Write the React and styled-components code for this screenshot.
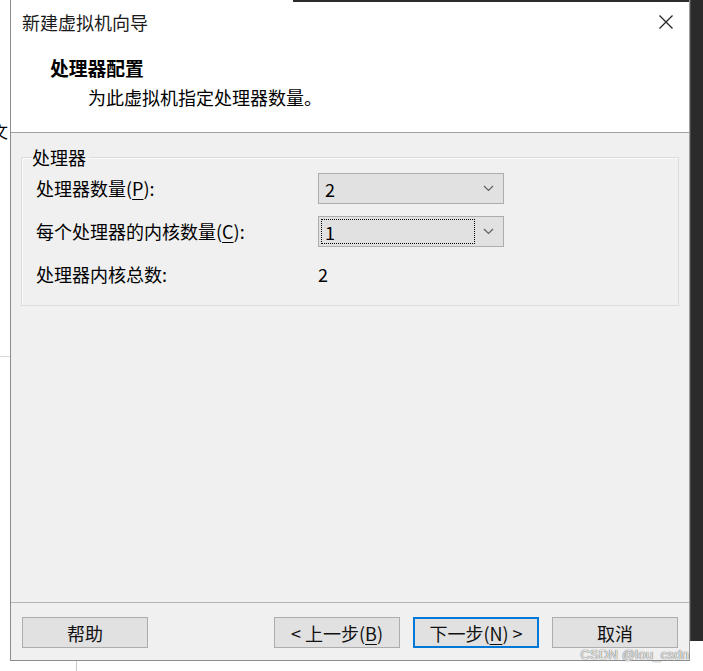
import styled, { createGlobalStyle } from "styled-components";

const GlobalStyle = createGlobalStyle`
  html, body {
    margin: 0;
    padding: 0;
    background: #ffffff;
    width: 703px;
    height: 671px;
    overflow: hidden;
  }
  body {
    font-family: "Noto Sans CJK SC", "Microsoft YaHei", sans-serif;
    color: #000;
  }
`;

const Stage = styled.div`
  position: relative;
  display: flex;
  align-items: flex-start;
  width: 703px;
  height: 671px;
`;

const Gutter = styled.div`
  width: 10px;
  height: 671px;
  overflow: hidden;
  display: flex;
  flex-direction: column;
  padding-top: 120px;
  box-sizing: border-box;
  .frag {
    font-size: 17px;
    line-height: 22px;
    margin-left: -9px;
    white-space: nowrap;
  }
  .edge {
    margin-top: 214px;
    height: 1px;
    background: #d8d8d8;
  }
`;

const WindowColumn = styled.div`
  display: flex;
  flex-direction: column;
`;

const Window = styled.div`
  width: 680px;
  height: 661px;
  box-sizing: border-box;
  border-left: 1px solid #8c8c8c;
  border-right: 1px solid #9a9a9a;
  border-bottom: 1px solid #8c8c8c;
  display: flex;
  flex-direction: column;
  background: #fff;
`;

const TopEdge = styled.div`
  height: 2px;
  background: linear-gradient(to right, #ffffff 282px, #2c2c2c 282px);
`;

const TitleBar = styled.div`
  height: 40px;
  display: flex;
  align-items: center;
  justify-content: space-between;
  padding-left: 11px;
  font-size: 18px;
  color: #1a1a1a;
`;

const CloseBox = styled.div`
  width: 46px;
  height: 40px;
  display: flex;
  align-items: center;
  justify-content: center;
`;

const Header = styled.div`
  padding: 13px 0 22px 39px;
  border-bottom: 1px solid #a0a0a0;
  .heading {
    font-size: 18.8px;
    font-weight: 700;
    line-height: 26px;
  }
  .sub {
    margin-top: 3px;
    padding-left: 38px;
    font-size: 18px;
    line-height: 26px;
  }
`;

const Body = styled.div`
  flex: 1;
  background: #f0f0f0;
  padding: 12px 10px 0 10px;
`;

const Group = styled.fieldset`
  margin: 0;
  padding: 4px 14px 15px 14px;
  border: 1px solid #dcdcdc;
  box-shadow: inset 1px 1px 0 #fafafa;
  display: grid;
  grid-template-columns: 282px 186px;
  row-gap: 12px;
  align-items: center;
  legend {
    margin-left: -4px;
    padding: 0 3px 0 0;
    font-size: 18px;
    line-height: 24px;
  }
`;

const Label = styled.div`
  font-size: 18px;
  line-height: 31px;
  height: 31px;
  u {
    text-decoration: underline;
    text-underline-offset: 3px;
  }
`;

const Value = styled.div`
  font-size: 18px;
  line-height: 31px;
  height: 31px;
`;

const Combo = styled.div`
  height: 31px;
  box-sizing: border-box;
  background: #e1e1e1;
  border: 1px solid #adadad;
  display: flex;
  align-items: center;
  justify-content: space-between;
  padding: 2px 9px 2px 2px;
  font-size: 18px;
`;

const ComboText = styled.div`
  height: 25px;
  line-height: 25px;
  box-sizing: border-box;
  padding-left: 3px;
  width: ${(p) => (p.$focused ? "154px" : "auto")};
  border: 1px dotted ${(p) => (p.$focused ? "#000" : "transparent")};
`;

const Footer = styled.div`
  border-top: 1px solid #b4b4b4;
  background: #f0f0f0;
  display: flex;
  justify-content: space-between;
  padding: 14px 11px 12px 11px;
`;

const ButtonGroup = styled.div`
  display: flex;
  gap: 13px;
`;

const Button = styled.div`
  width: 126px;
  height: 31px;
  box-sizing: border-box;
  background: #e1e1e1;
  border: ${(p) => (p.$default ? "2px solid #0078d7" : "1px solid #adadad")};
  display: flex;
  align-items: center;
  justify-content: center;
  font-size: 18px;
  color: #111;
  u {
    text-decoration: underline;
    text-underline-offset: 3px;
  }
`;

const Underhang = styled.div`
  height: 10px;
  margin-left: 66px;
  border-left: 1px solid #c8c8c8;
`;

const Backdrop = styled.div`
  width: 13px;
  height: 641px;
  background: #2b2b2b;
  border-left: 1px solid #4a4a4a;
  box-sizing: border-box;
`;

const Watermark = styled.div`
  position: absolute;
  right: 14px;
  bottom: 9px;
  font-family: "Liberation Sans", Arial, sans-serif;
  font-size: 13px;
  line-height: 14px;
  color: #ececec;
  text-shadow: 0 0 1px #666, 0 0 1px #666;
  letter-spacing: 0.2px;
`;

const Chevron = () => (
  <svg width="11" height="7" viewBox="0 0 11 7">
    <path d="M1 1 L5.5 5.5 L10 1" fill="none" stroke="#606060" strokeWidth="1.2" />
  </svg>
);

const CloseIcon = () => (
  <svg width="16" height="16" viewBox="0 0 16 16">
    <path d="M1.5 1.5 L14.5 14.5 M14.5 1.5 L1.5 14.5" stroke="#262626" strokeWidth="1.3" />
  </svg>
);

export default function App() {
  return (
    <Stage>
      <GlobalStyle />
      <Gutter>
        <span className="frag">文</span>
        <div className="edge" />
      </Gutter>
      <WindowColumn>
        <Window>
          <TopEdge />
          <TitleBar>
            <span>新建虚拟机向导</span>
            <CloseBox>
              <CloseIcon />
            </CloseBox>
          </TitleBar>
          <Header>
            <div className="heading">处理器配置</div>
            <div className="sub">为此虚拟机指定处理器数量。</div>
          </Header>
          <Body>
            <Group>
              <legend>处理器</legend>
              <Label>
                处理器数量(<u>P</u>):
              </Label>
              <Combo>
                <ComboText>2</ComboText>
                <Chevron />
              </Combo>
              <Label>
                每个处理器的内核数量(<u>C</u>):
              </Label>
              <Combo>
                <ComboText $focused>1</ComboText>
                <Chevron />
              </Combo>
              <Label>处理器内核总数:</Label>
              <Value>2</Value>
            </Group>
          </Body>
          <Footer>
            <Button>帮助</Button>
            <ButtonGroup>
              <Button>
                &lt; 上一步(<u>B</u>)
              </Button>
              <Button $default>
                下一步(<u>N</u>) &gt;
              </Button>
              <Button>取消</Button>
            </ButtonGroup>
          </Footer>
        </Window>
        <Underhang />
      </WindowColumn>
      <Backdrop />
      <Watermark>CSDN @lou_csdn</Watermark>
    </Stage>
  );
}
